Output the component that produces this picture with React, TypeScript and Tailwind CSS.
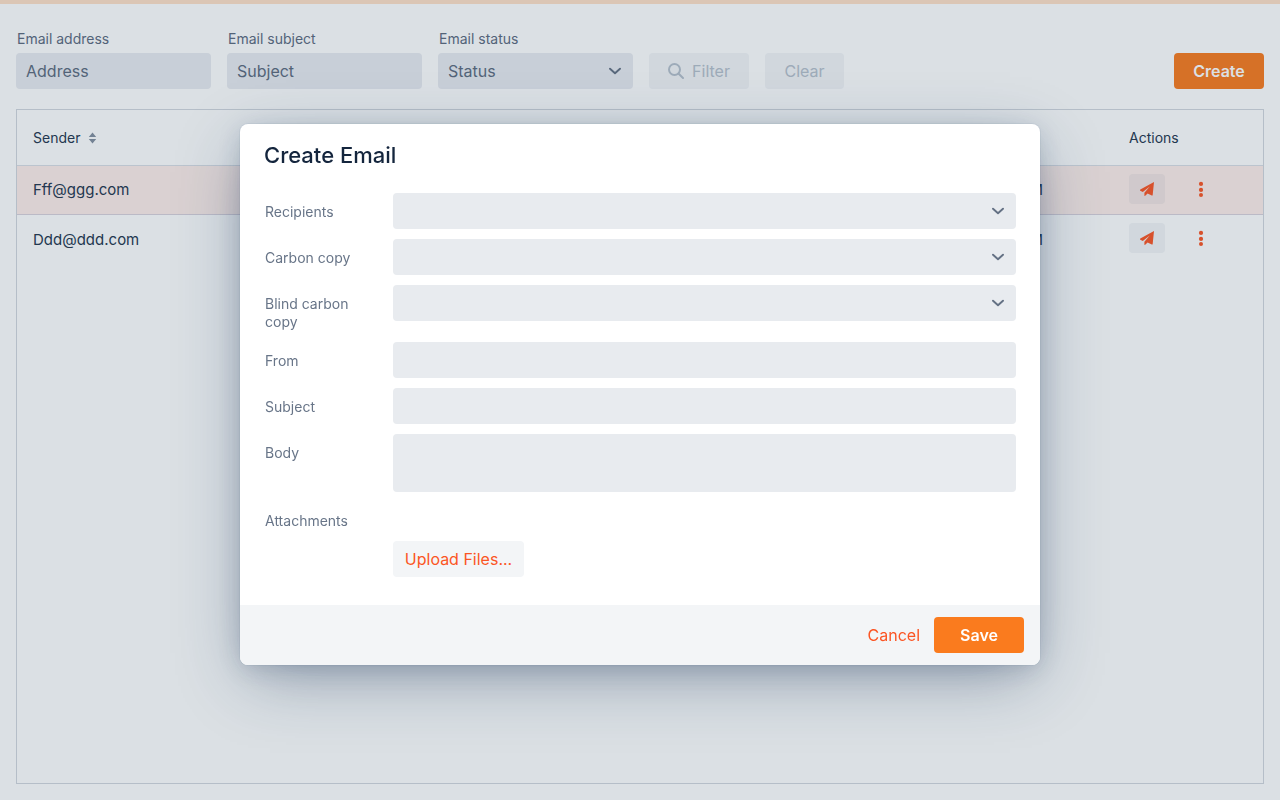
import type { ReactNode } from "react";

const fieldBase =
  "h-9 w-full appearance-none rounded-[4px] px-[10px] text-base text-[#5d6b7f] outline-none placeholder:text-[#5d6b7f] placeholder:opacity-100";
const field = `${fieldBase} bg-[#e8ebef]`;
const filterField = `${fieldBase} bg-[#e9ebf1]`;

function Chevron() {
  return (
    <svg
      className="pointer-events-none absolute right-3 top-3 h-3 w-3"
      viewBox="0 0 12 12"
      fill="none"
      stroke="#647184"
      strokeWidth="1.9"
      strokeLinecap="round"
      strokeLinejoin="round"
      aria-hidden="true"
    >
      <path d="M1 3.7 L6 8.3 L11 3.7" />
    </svg>
  );
}

function FilterField({ id, label, children }: { id: string; label: string; children: ReactNode }) {
  return (
    <div className="flex w-[195px] flex-col gap-1">
      <label htmlFor={id} className="pl-px text-sm leading-5 text-[#5d6b7f]">
        {label}
      </label>
      <div className="relative">{children}</div>
    </div>
  );
}

function FormRow({ id, label, children }: { id: string; label: string; children: ReactNode }) {
  return (
    <div className="flex items-start">
      <div className="w-[129px] shrink-0 pb-px pl-px pr-6 pt-[10px] text-sm leading-[18px] text-[#687588]">
        <label htmlFor={id} className="block">
          {label}
        </label>
      </div>
      <div className="relative flex-1">{children}</div>
    </div>
  );
}

function ComboRow({ id, label }: { id: string; label: string }) {
  return (
    <FormRow id={id} label={label}>
      <select id={id} className={field}>
        <option value=""></option>
      </select>
      <Chevron />
    </FormRow>
  );
}

function EmailRow({ sender, highlighted }: { sender: string; highlighted?: boolean }) {
  return (
    <tr className={highlighted ? "h-[49px] border-b border-[#d9d2dc] bg-[#feeeea]" : "h-[49px]"}>
      <td className="px-4 pt-[2px] text-[15px] text-[#24364e]">{sender}</td>
      <td className="pt-[2px] text-right text-[15px] text-[#24364e]">PM</td>
      <td className="pl-[86px]">
        <div className="flex items-center gap-[18px] pb-[2px]">
          <button
            type="button"
            aria-label="Send"
            className="flex h-[30px] w-9 items-center justify-center rounded-[4px] bg-[#1c375a0d] text-[#fb5524]"
          >
            <svg className="h-[14px] w-[14px]" viewBox="0 0 14 14" fill="currentColor" aria-hidden="true">
              <path d="M14 0 L0.3 7.6 Q-0.3 8.2 0.3 8.8 L2.8 10 L9.8 4.6 L4.4 10.8 V13.6 Q4.6 14.2 5.2 13.7 L7.6 11.5 L11.8 13.5 Q12.6 13.7 12.7 12.9 Z" />
            </svg>
          </button>
          <button type="button" aria-label="More" className="flex h-[30px] w-9 items-center justify-center">
            <svg className="h-4 w-4" viewBox="0 0 16 16" fill="#fb5524" aria-hidden="true">
              <circle cx="8" cy="2.9" r="2.1" />
              <circle cx="8" cy="8.9" r="2.1" />
              <circle cx="8" cy="14" r="2" />
            </svg>
          </button>
        </div>
      </td>
    </tr>
  );
}

export default function App() {
  return (
    <div className="min-h-screen bg-white font-['Inter','Noto_Sans',sans-serif] text-[#24364e]">
      <main className="flex min-h-screen flex-col border-t-4 border-[#ffe0c8] px-4 pb-4 pt-[25px]">
        <div className="flex items-end gap-4">
          <FilterField id="address" label="Email address">
            <input id="address" placeholder="Address" className={filterField} />
          </FilterField>
          <FilterField id="subject" label="Email subject">
            <input id="subject" placeholder="Subject" className={filterField} />
          </FilterField>
          <FilterField id="status" label="Email status">
            <select id="status" className={filterField}>
              <option>Status</option>
            </select>
            <Chevron />
          </FilterField>
          <button
            type="button"
            disabled
            className="flex h-9 w-[100px] items-center justify-center gap-2 rounded-[4px] bg-[#f3f5f7] text-[#b6c0cc]"
          >
            <svg
              className="h-4 w-4"
              viewBox="0 0 16 16"
              fill="none"
              stroke="currentColor"
              strokeWidth="2"
              strokeLinecap="round"
              aria-hidden="true"
            >
              <circle cx="6.5" cy="6.5" r="5.5" />
              <path d="M10.7 10.7 L15 15" />
            </svg>
            Filter
          </button>
          <button type="button" disabled className="h-9 w-[79px] rounded-[4px] bg-[#f3f5f7] text-[#b6c0cc]">
            Clear
          </button>
          <button type="button" className="ml-auto h-9 w-[90px] rounded-[4px] bg-[#fa7b1e] font-semibold text-white">
            Create
          </button>
        </div>

        <div className="mt-5 flex-1 border border-[#d2d7de]">
          <table className="w-full table-fixed border-collapse">
            <colgroup>
              <col />
              <col className="w-[400px]" />
              <col className="w-[220px]" />
            </colgroup>
            <thead>
              <tr className="h-[55px] border-b border-[#d9dee5] text-left text-sm">
                <th className="px-4 pt-[2px] font-normal">
                  <span className="flex items-center gap-2">
                    Sender
                    <svg className="h-3 w-[9px]" viewBox="0 0 9 12" fill="#8490a0" aria-hidden="true">
                      <path d="M4.5 0.5 L8.2 5 H0.8 Z M4.5 11.5 L8.2 7 H0.8 Z" />
                    </svg>
                  </span>
                </th>
                <th></th>
                <th className="pl-[86px] pt-[2px] font-normal">Actions</th>
              </tr>
            </thead>
            <tbody>
              <EmailRow sender="Fff@ggg.com" highlighted />
              <EmailRow sender="Ddd@ddd.com" />
            </tbody>
          </table>
        </div>
      </main>

      <div className="fixed inset-0 flex items-center justify-center bg-[#1c3f5529] pb-[11px]">
        <section
          role="dialog"
          aria-modal="true"
          aria-labelledby="dialog-title"
          className="w-[800px] max-w-full overflow-hidden rounded-lg bg-white shadow-[0_0_0_1px_#1c375a0d,0_4px_24px_-3px_#1c375a38,0_18px_64px_-8px_#1c375a6b]"
        >
          <h2 id="dialog-title" className="px-6 pb-6 pt-[17px] text-[22px] font-medium leading-7 text-[#14253d]">
            Create Email
          </h2>
          <form className="flex flex-col gap-[10px] px-6 pb-7">
            <ComboRow id="recipients" label="Recipients" />
            <ComboRow id="cc" label="Carbon copy" />
            <ComboRow id="bcc" label="Blind carbon copy" />
            <FormRow id="from" label="From">
              <input id="from" className={field} />
            </FormRow>
            <FormRow id="mail-subject" label="Subject">
              <input id="mail-subject" className={field} />
            </FormRow>
            <FormRow id="body" label="Body">
              <textarea
                id="body"
                className="block h-[58px] w-full resize-none rounded-[4px] bg-[#e8ebef] px-[10px] py-2 outline-none"
              />
            </FormRow>
            <FormRow id="attachments" label="Attachments">
              <button
                id="attachments"
                type="button"
                className="mt-[39px] block h-9 w-[131px] rounded-[4px] bg-[#f3f5f7] text-[#fb5524]"
              >
                Upload Files...
              </button>
            </FormRow>
          </form>
          <footer className="flex items-center justify-end gap-[14px] bg-[#f3f5f7] px-4 py-3">
            <button type="button" className="h-9 text-[#fb5524]">
              Cancel
            </button>
            <button type="button" className="h-9 w-[90px] rounded-[4px] bg-[#fa7b1e] font-semibold text-white">
              Save
            </button>
          </footer>
        </section>
      </div>
    </div>
  );
}
